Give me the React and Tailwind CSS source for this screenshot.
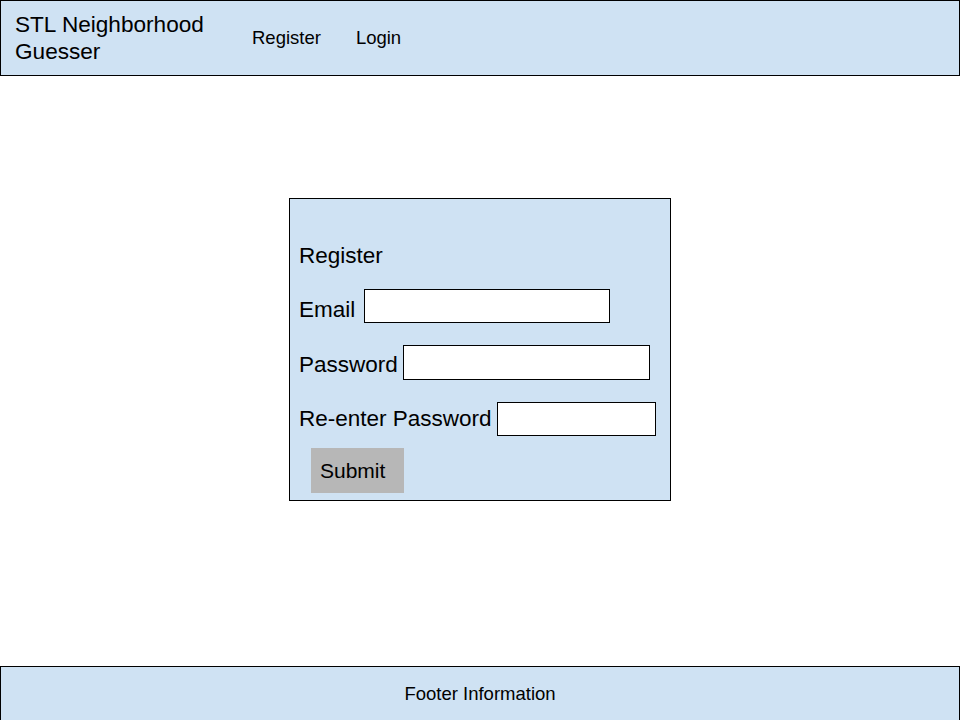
import React from "react";

export default function App() {
  return (
    <div
      className="h-[720px] w-[960px] flex flex-col bg-white text-black overflow-hidden"
      style={{ fontFamily: '"Liberation Sans", Arial, sans-serif' }}
    >
      <header className="h-[76px] shrink-0 border border-black bg-[#cfe2f3] flex items-center pl-[14px]">
        <div className="w-[237px] text-[22.6px] leading-[27px]">
          <div>STL Neighborhood</div>
          <div>Guesser</div>
        </div>
        <nav className="flex items-center gap-[35px] text-[18.5px]">
          <span>Register</span>
          <span>Login</span>
        </nav>
      </header>

      <main className="flex-1 flex justify-center">
        <div className="mt-[122px] w-[382px] h-[303px] border border-black bg-[#cfe2f3] pl-[9px] pt-[44px] flex flex-col">
          <div className="h-[26px] leading-[26px] text-[22.5px]">Register</div>

          <div className="mt-[20px] h-[34px] flex items-center text-[22.5px]">
            <span className="pt-[7px]">Email</span>
            <div className="ml-[9px] w-[246px] h-[34px] border border-black bg-white" />
          </div>

          <div className="mt-[22px] h-[35px] flex items-center text-[22.5px]">
            <span className="pt-[4px]">Password</span>
            <div className="ml-[5px] w-[247px] h-[35px] border border-black bg-white" />
          </div>

          <div className="mt-[22px] h-[34px] flex items-center text-[22.5px]">
            <span>Re-enter Password</span>
            <div className="ml-[5px] w-[159px] h-[34px] border border-black bg-white" />
          </div>

          <div className="mt-[12px] ml-[12px] w-[93px] h-[45px] bg-[#b7b7b7] flex items-center pl-[9px] text-[21px]">
            Submit
          </div>
        </div>
      </main>

      <footer className="h-[54px] shrink-0 border-t border-x border-black bg-[#cfe2f3] flex items-center justify-center text-[18.5px]">
        Footer Information
      </footer>
    </div>
  );
}
